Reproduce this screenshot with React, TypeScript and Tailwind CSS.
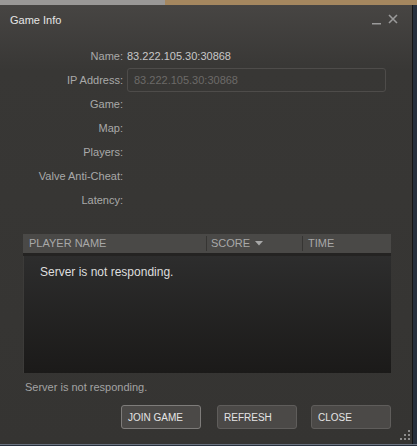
const rows = ["Name:", "IP Address:", "Game:", "Map:", "Players:", "Valve Anti-Cheat:", "Latency:"];

const App = () => {
    return (
        <div className="w-[417px] h-[446px] overflow-hidden bg-[#27303d] flex flex-col font-['Liberation_Sans',Arial,sans-serif]">
            <div className="h-[5px] flex shrink-0">
                <div className="w-[165px] bg-[#9a9897]"></div>
                <div className="flex-1 bg-[#a5875f]"></div>
            </div>
            <div className="w-[413px] h-[439px] flex flex-col border-r border-[#161616] bg-gradient-to-b from-[#474543] via-[#383735] via-[15%] to-[#353432] relative">
                <div className="h-[30px] flex items-center justify-between pl-[10px] pr-[14px] shrink-0">
                    <span className="text-[11px] text-[#e6e6e6]">Game Info</span>
                    <div className="flex items-center gap-[7px] mt-[-2px]">
                        <svg width="9" height="12" viewBox="0 0 9 12"><rect x="0" y="10" width="9" height="1.5" fill="#9a9a9a" /></svg>
                        <svg width="10" height="10" viewBox="0 0 10 10"><path d="M1 1 L9 9 M9 1 L1 9" stroke="#9a9a9a" strokeWidth="1.6" /></svg>
                    </div>
                </div>

                <div className="pt-[9px] flex flex-col">
                    {rows.map((label) => (
                        <div key={label} className="h-[24px] flex items-center">
                            <span className="w-[123px] text-right text-[11px] text-[#a9a9a9]">{label}</span>
                            <div className="ml-[4px] flex-1 flex items-center">
                                {label === "Name:" && <span className="text-[11px] text-[#c8c8c8]">83.222.105.30:30868</span>}
                                {label === "IP Address:" && (
                                    <div className="w-[259px] h-[24px] border border-[#4e4c4a] rounded-[3px] flex items-center pl-[6px] text-[11px] text-[#6c6a68]">83.222.105.30:30868</div>
                                )}
                            </div>
                        </div>
                    ))}
                </div>

                <div className="mt-[22px] ml-[23px] w-[368px] flex flex-col">
                    <div className="h-[19px] bg-[#4a4947] flex items-center text-[11px] text-[#a8a8a8]">
                        <div className="w-[183px] pl-[6px]">PLAYER NAME</div>
                        <div className="w-[96px] h-[15px] border-l border-[#363533] pl-[4px] flex items-center gap-[5px]">
                            SCORE
                            <svg width="8" height="5" viewBox="0 0 8 5"><path d="M0 0 L8 0 L4 4.5 Z" fill="#a8a8a8" /></svg>
                        </div>
                        <div className="flex-1 h-[15px] border-l border-[#363533] pl-[5px] flex items-center">TIME</div>
                    </div>
                    <div className="h-[3px] bg-[#242322]"></div>
                    <div className="h-[117px] bg-gradient-to-b from-[#2d2d2d] to-[#1b1a19] border-l border-[#3c3b39] pl-[16px] pt-[3px]">
                        <span className="text-[12px] text-[#dedede]">Server is not responding.</span>
                    </div>
                </div>

                <div className="mt-[6px] ml-[25px] h-[16px] flex items-center text-[11px] text-[#a3a3a3]">Server is not responding.</div>

                <div className="mt-[10px] flex pl-[121px] gap-[16px]">
                    <button className="w-[80px] h-[24px] rounded-[3px] border border-[#7e7c7a] bg-[#4b4947] text-left pl-[6px] text-[10px] text-[#e4e4e4]">JOIN GAME</button>
                    <button className="w-[80px] h-[24px] rounded-[3px] border border-[#5f5d5b] bg-[#4b4947] text-left pl-[6px] text-[10px] text-[#e4e4e4]">REFRESH</button>
                    <button className="ml-[-2px] w-[80px] h-[24px] rounded-[3px] border border-[#5f5d5b] bg-[#4b4947] text-left pl-[6px] text-[10px] text-[#e4e4e4]">CLOSE</button>
                </div>

                <svg className="absolute right-[1px] bottom-[3px]" width="11" height="11" viewBox="0 0 11 11">
                    <rect x="8" y="0" width="2" height="2" fill="#8c8c8c" />
                    <rect x="4" y="4" width="2" height="2" fill="#8c8c8c" />
                    <rect x="8" y="4" width="2" height="2" fill="#8c8c8c" />
                    <rect x="0" y="8" width="2" height="2" fill="#8c8c8c" />
                    <rect x="4" y="8" width="2" height="2" fill="#8c8c8c" />
                    <rect x="8" y="8" width="2" height="2" fill="#8c8c8c" />
                </svg>
            </div>
            <div className="h-[1px] bg-[#6a7280]"></div>
        </div>
    );
};

export default App;
